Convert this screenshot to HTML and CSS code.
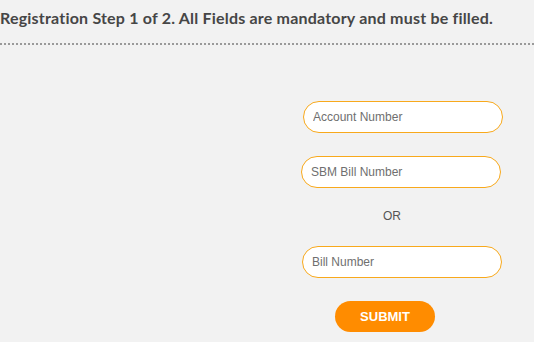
FILE: index.html
```html
<!DOCTYPE html>
<html>
<head>
<meta charset="utf-8">
<link rel="stylesheet" href="styles.css">
</head>
<body>
<div class="page">
  <h1 class="title">Registration Step 1 of 2. All Fields are mandatory and must be filled.</h1>
  <div class="rule"></div>
  <form class="form">
    <input class="field f1" type="text" placeholder="Account Number">
    <input class="field f2" type="text" placeholder="SBM Bill Number">
    <div class="or">OR</div>
    <input class="field f3" type="text" placeholder="Bill Number">
    <button class="submit" type="button">SUBMIT</button>
  </form>
</div>
</body>
</html>
```
FILE: styles.css
```css
html, body {
  margin: 0;
  padding: 0;
  background: #f2f2f2;
}
.page {
  width: 534px;
  height: 342px;
  overflow: hidden;
}
.title {
  margin: 0;
  padding: 8px 0 0 0;
  font-family: Lato, "Open Sans", sans-serif;
  font-weight: 700;
  font-size: 16px;
  letter-spacing: 0.2px;
  line-height: 20px;
  color: #464646;
  white-space: nowrap;
}
.rule {
  margin-top: 15px;
  height: 0;
  border-top: 2px dotted #9a9a9a;
}
.form {
  display: flex;
  flex-direction: column;
  align-items: flex-start;
  padding-left: 301px;
  padding-top: 56px;
}
.field {
  box-sizing: border-box;
  width: 200px;
  height: 32px;
  border: 1px solid #f8a91c;
  border-radius: 16px;
  background: #fff;
  padding: 0 9px;
  font-family: "Liberation Sans", Arial, sans-serif;
  font-size: 12px;
  color: #333;
  outline: none;
}
.field::placeholder {
  color: #6f6f6f;
}
.f1 { margin-left: 2px; }
.f2 { margin-top: 23px; }
.f3 { margin-top: 0; margin-left: 1px; }
.or {
  width: 200px;
  text-align: center;
  font-family: "Liberation Sans", Arial, sans-serif;
  font-size: 12px;
  color: #555;
  line-height: 14px;
  padding: 21px 0 23px 0;
  text-indent: -18px;
}
.submit {
  margin-top: 23px;
  margin-left: 34px;
  width: 100px;
  height: 31px;
  border: none;
  border-radius: 16px;
  background: #ff8c00;
  color: #fff;
  font-family: "Liberation Sans", Arial, sans-serif;
  font-weight: 700;
  font-size: 13px;
  padding: 0;
}
```
